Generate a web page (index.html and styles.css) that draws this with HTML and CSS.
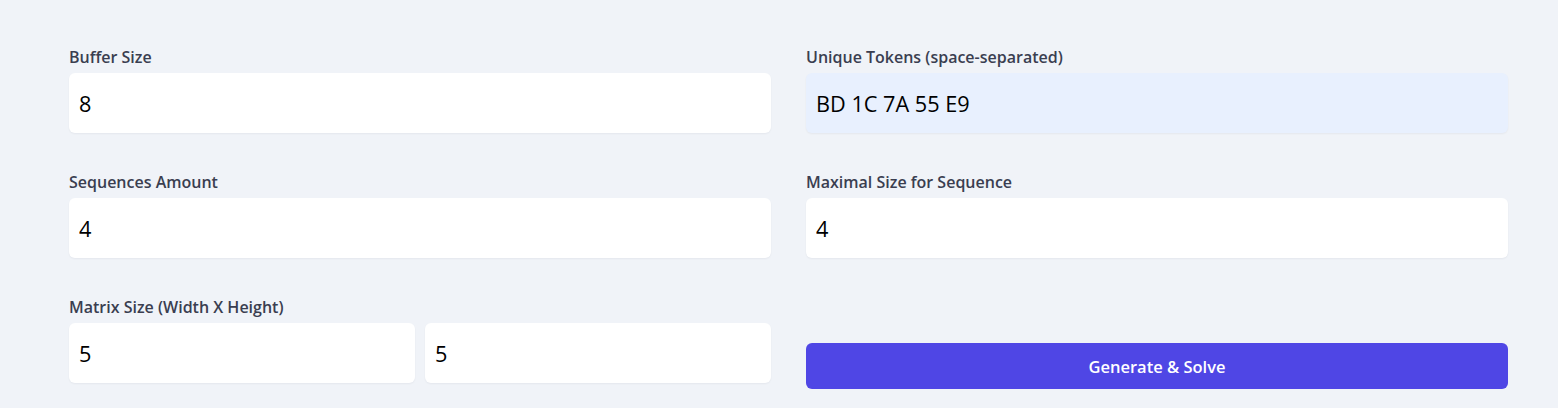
FILE: index.html
```html
<!DOCTYPE html>
<html lang="en">
<head>
<meta charset="utf-8">
<title>Form</title>
<link rel="stylesheet" href="styles.css">
</head>
<body>
<main class="page">
  <form class="form">
    <div class="field">
      <label class="label">Buffer Size</label>
      <input class="input" type="text" value="8">
    </div>
    <div class="field">
      <label class="label">Unique Tokens (space-separated)</label>
      <input class="input input-filled" type="text" value="BD 1C 7A 55 E9">
    </div>
    <div class="field">
      <label class="label">Sequences Amount</label>
      <input class="input" type="text" value="4">
    </div>
    <div class="field">
      <label class="label">Maximal Size for Sequence</label>
      <input class="input" type="text" value="4">
    </div>
    <div class="field">
      <label class="label">Matrix Size (Width X Height)</label>
      <div class="pair">
        <input class="input" type="text" value="5">
        <input class="input" type="text" value="5">
      </div>
    </div>
    <div class="field field-action">
      <button class="button" type="button">Generate &amp; Solve</button>
    </div>
  </form>
</main>
</body>
</html>
```

FILE: styles.css
```css
html, body {
  margin: 0;
  padding: 0;
}
body {
  background: #f0f3f8;
  font-family: "Open Sans", "Noto Sans", "Liberation Sans", sans-serif;
  color: #111827;
}
.page {
  padding: 47px 50px 0 69px;
}
.form {
  display: grid;
  grid-template-columns: 1fr 1fr;
  column-gap: 35px;
  row-gap: 39px;
}
.field {
  display: flex;
  flex-direction: column;
  gap: 6px;
}
.label {
  font-size: 16px;
  line-height: 20px;
  font-weight: 600;
  color: #3a3e50;
}
.input {
  box-sizing: border-box;
  height: 60px;
  width: 100%;
  border: none;
  border-radius: 6px;
  background: #ffffff;
  box-shadow: 0 1px 2px rgba(15, 23, 42, 0.05);
  padding: 0 10px;
  font-family: inherit;
  font-size: 21.7px;
  color: #000;
  outline: none;
}
.input-filled {
  background: #e8f0fe;
}
.pair {
  display: grid;
  grid-template-columns: 1fr 1fr;
  gap: 10px;
}
.field-action {
  justify-content: flex-start;
}
.button {
  height: 46px;
  margin-top: 46px;
  border: none;
  border-radius: 6px;
  background: #4f46e5;
  color: #fff;
  font-family: inherit;
  font-size: 16.5px;
  font-weight: 600;
}
```
